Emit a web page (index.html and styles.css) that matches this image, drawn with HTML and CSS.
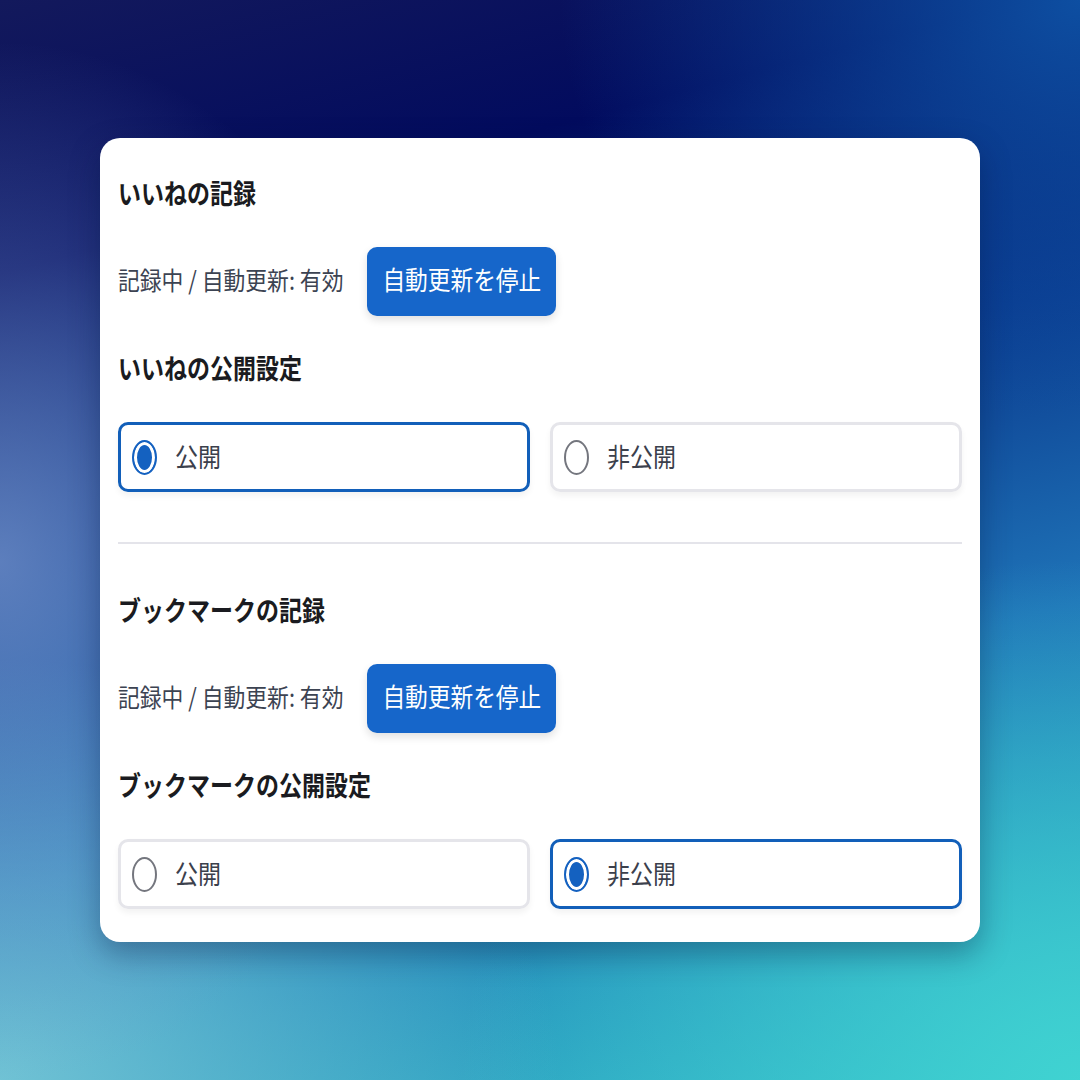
FILE: index.html
```html
<!DOCTYPE html>
<html lang="ja">
<head>
<meta charset="utf-8">
<link rel="stylesheet" href="styles.css">
</head>
<body>
<main class="card">
  <section class="section">
    <h2 class="title"><span class="tx">いいねの記録</span></h2>
    <div class="status-row">
      <span class="status tx">記録中 / 自動更新: 有効</span>
      <button class="btn"><span class="tx">自動更新を停止</span></button>
    </div>
    <h2 class="title"><span class="tx">いいねの公開設定</span></h2>
    <div class="options">
      <div class="option selected"><span class="radio checked"></span><span class="label tx">公開</span></div>
      <div class="option"><span class="radio"></span><span class="label tx">非公開</span></div>
    </div>
  </section>
  <hr class="divider">
  <section class="section">
    <h2 class="title"><span class="tx">ブックマークの記録</span></h2>
    <div class="status-row">
      <span class="status tx">記録中 / 自動更新: 有効</span>
      <button class="btn"><span class="tx">自動更新を停止</span></button>
    </div>
    <h2 class="title"><span class="tx">ブックマークの公開設定</span></h2>
    <div class="options">
      <div class="option"><span class="radio"></span><span class="label tx">公開</span></div>
      <div class="option selected"><span class="radio checked"></span><span class="label tx">非公開</span></div>
    </div>
  </section>
</main>
</body>
</html>
```

FILE: styles.css
```css
html, body {
  margin: 0;
  padding: 0;
}
body {
  width: 1080px;
  height: 1080px;
  box-sizing: border-box;
  padding-top: 138px;
  display: flex;
  justify-content: center;
  align-items: flex-start;
  font-family: "Noto Sans CJK JP", "Noto Sans", sans-serif;
  background:
    radial-gradient(ellipse 520px 420px at 100% 0%, rgba(14,82,165,0.95), rgba(14,82,165,0) 100%),
    radial-gradient(ellipse 420px 520px at 0% 52%, rgba(120,150,205,0.75), rgba(120,150,205,0) 100%),
    radial-gradient(ellipse 560px 420px at 0% 100%, rgba(120,200,215,0.9), rgba(120,200,215,0) 100%),
    radial-gradient(ellipse 620px 520px at 100% 100%, rgba(64,212,210,0.95), rgba(64,212,210,0) 100%),
    linear-gradient(165deg, #13195c 0%, #020b5e 20%, #0a3a8e 42%, #1f74b8 65%, #2a9cc0 85%, #35b8c8 100%);
  overflow: hidden;
}
.tx {
  display: inline-block;
  transform: translateY(-2px) scaleY(1.15);
}
.card {
  width: 880px;
  box-sizing: border-box;
  background: #ffffff;
  border-radius: 20px;
  padding: 38px 18px 33px;
  box-shadow: 0 12px 30px rgba(5, 20, 60, 0.35);
}
.section {
  display: flex;
  flex-direction: column;
  gap: 35px;
}
.title {
  margin: 0;
  height: 36px;
  line-height: 36px;
  font-size: 23px;
  font-weight: 700;
  color: #1a1b20;
}
.title .tx {
  transform: translateY(-2px) scaleY(1.2);
}
.status-row {
  display: flex;
  align-items: center;
  gap: 24px;
  height: 69px;
}
.status {
  font-size: 21.8px;
  color: #3c4352;
}
.btn {
  height: 69px;
  padding: 0 15px;
  border: none;
  border-radius: 10px;
  background: #1666ca;
  color: #ffffff;
  font-family: inherit;
  font-size: 22.7px;
  box-shadow: 0 4px 8px rgba(0, 0, 0, 0.12);
}
.options {
  display: grid;
  grid-template-columns: 1fr 1fr;
  gap: 20px;
}
.option {
  height: 70px;
  box-sizing: border-box;
  border: 3px solid #e5e5ea;
  border-radius: 10px;
  display: flex;
  align-items: center;
  gap: 18px;
  padding-left: 11px;
  box-shadow: 0 4px 6px rgba(0, 0, 0, 0.05);
}
.option.selected {
  border-color: #125fb9;
}
.radio {
  width: 25px;
  height: 35px;
  box-sizing: border-box;
  border-radius: 50%;
  border: 2px solid #74767e;
  flex: none;
}
.radio.checked {
  border: 2px solid #1461c0;
  background: #1461c0;
  box-shadow: inset 0 0 0 3px #ffffff;
}
.label {
  font-size: 23px;
  color: #3b404c;
}
.divider {
  margin: 50px 0 49px;
  border: none;
  height: 2px;
  background: #e4e4ea;
}
```
